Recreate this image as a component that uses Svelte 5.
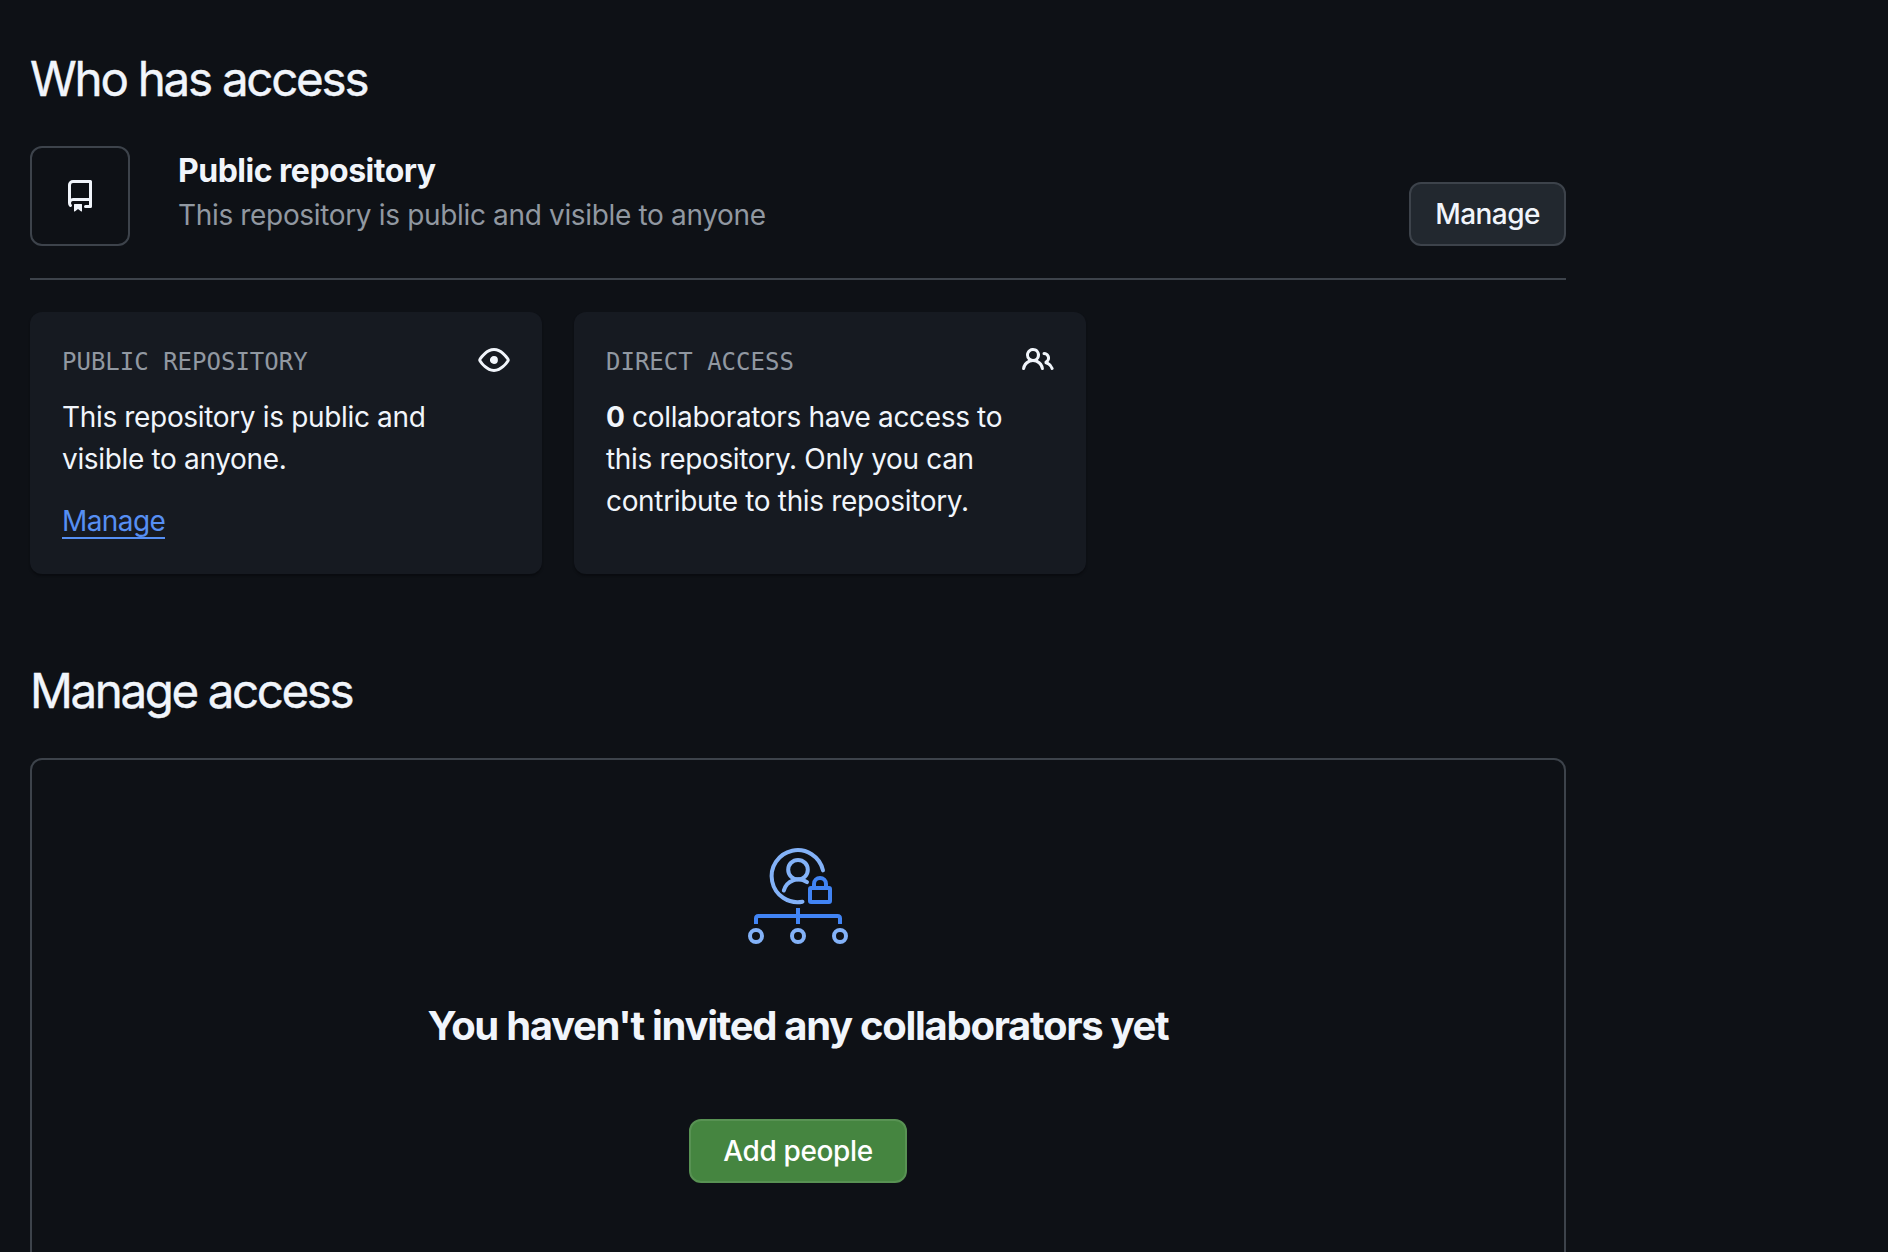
<script>
  const cards = [
    { title: 'Public repository', icon: 'eye' },
    { title: 'Direct access', icon: 'people' }
  ];
  const paths = {
    repo: 'M2 2.5A2.5 2.5 0 0 1 4.5 0h8.75a.75.75 0 0 1 .75.75v12.5a.75.75 0 0 1-.75.75h-2.5a.75.75 0 0 1 0-1.5h1.75v-2h-8a1 1 0 0 0-.714 1.7.75.75 0 1 1-1.072 1.05A2.495 2.495 0 0 1 2 11.5Zm10.5-1h-8a1 1 0 0 0-1 1v6.708A2.486 2.486 0 0 1 4.5 9h8ZM5 12.25a.25.25 0 0 1 .25-.25h3.5a.25.25 0 0 1 .25.25v3.25a.25.25 0 0 1-.4.2l-1.45-1.087a.249.249 0 0 0-.3 0L5.4 15.7a.25.25 0 0 1-.4-.2Z',
    eye: 'M8 2c1.981 0 3.671.992 4.933 2.078 1.27 1.091 2.187 2.345 2.637 3.023a1.62 1.62 0 0 1 0 1.798c-.45.678-1.367 1.932-2.637 3.023C11.67 13.008 9.981 14 8 14c-1.981 0-3.671-.992-4.933-2.078C1.797 10.83.88 9.576.43 8.898a1.62 1.62 0 0 1 0-1.798c.45-.677 1.367-1.931 2.637-3.022C4.33 2.992 6.019 2 8 2ZM1.679 7.932a.12.12 0 0 0 0 .136c.411.622 1.241 1.75 2.366 2.717C5.176 11.758 6.527 12.5 8 12.5c1.473 0 2.825-.742 3.955-1.715 1.124-.967 1.954-2.096 2.366-2.717a.12.12 0 0 0 0-.136c-.412-.621-1.242-1.75-2.366-2.717C10.824 4.242 9.473 3.5 8 3.5c-1.473 0-2.825.742-3.955 1.715-1.124.967-1.954 2.096-2.366 2.717ZM8 10a2 2 0 1 1-.001-3.999A2 2 0 0 1 8 10Z',
    people: 'M2 5.5a3.5 3.5 0 1 1 5.898 2.549 5.508 5.508 0 0 1 3.034 4.084.75.75 0 1 1-1.482.235 4 4 0 0 0-7.9 0 .75.75 0 0 1-1.482-.236A5.507 5.507 0 0 1 3.102 8.05 3.493 3.493 0 0 1 2 5.5ZM11 4a3.001 3.001 0 0 1 2.22 5.018 5.01 5.01 0 0 1 2.56 3.012.749.749 0 0 1-.885.954.752.752 0 0 1-.549-.514 3.507 3.507 0 0 0-2.522-2.372.75.75 0 0 1-.574-.73v-.352a.75.75 0 0 1 .416-.672A1.5 1.5 0 0 0 11 5.5.75.75 0 0 1 11 4Zm-5.5-.5a2 2 0 1 0-.001 3.999A2 2 0 0 0 5.5 3.5Z'
  };
</script>

{#snippet icon(name)}
  <svg class="icon" viewBox="0 0 16 16" aria-hidden="true"><path d={paths[name]} /></svg>
{/snippet}

<main>
  <h2 class="who">Who has access</h2>

  <section class="visibility">
    <div class="repo-box">{@render icon('repo')}</div>
    <div class="summary">
      <strong>Public repository</strong>
      <span>This repository is public and visible to anyone</span>
    </div>
    <button class="btn">Manage</button>
  </section>

  <section class="cards">
    {#each cards as card}
      <article class="card">
        <header>
          <h3>{card.title}</h3>
          {@render icon(card.icon)}
        </header>
        {#if card.icon === 'eye'}
          <p>This repository is public and<br />visible to anyone.</p>
          <a href="#manage">Manage</a>
        {:else}
          <p><b>0</b> collaborators have access to<br />this repository. Only you can<br />contribute to this repository.</p>
        {/if}
      </article>
    {/each}
  </section>

  <h2 class="manage" id="manage">Manage access</h2>

  <section class="panel">
    <svg class="art" viewBox="0 0 100 100" fill="none" stroke-width="4" stroke-linecap="round" aria-hidden="true">
      <g stroke="#83b2f8">
        <path d="M75 24.4A26 26 0 1 0 54.5 55.7" />
        <circle cx="50" cy="23.7" r="9.8" />
        <path d="M35.8 44.5A15 15 0 0 1 59 36.2" />
        <circle cx="8" cy="90" r="6" />
        <circle cx="50" cy="90" r="6" />
        <circle cx="92" cy="90" r="6" />
      </g>
      <g stroke="#4184f4">
        <rect x="62" y="42" width="20" height="14" rx="1" />
        <path stroke-linecap="butt" d="M66 42V38a6 6 0 0 1 12 0V42" />
        <path stroke-linecap="butt" d="M8 78V72.500Q8 70 10.500 70H89.500Q92 70 92 72.500V78M50 62V78" />
      </g>
    </svg>
    <h3>You haven't invited any collaborators yet</h3>
    <button class="btn primary">Add people</button>
  </section>
</main>

<style>
  :global(body) {
    background: #0e1116;
    overflow: hidden;
  }
  main {
    box-sizing: border-box;
    width: 1596px;
    height: 1252px;
    overflow: hidden;
    padding: 43px 30px 0;
    color: #f1f5fb;
    font: 400 28px/42px Inter, "Liberation Sans", sans-serif;
    letter-spacing: -0.34px;
  }
  h2, h3, p {
    margin: 0;
  }
  h2 {
    font-size: 47.5px;
    font-weight: 400;
    line-height: 72px;
    letter-spacing: -2.25px;
    white-space: nowrap;
    -webkit-text-stroke: 0.4px currentColor;
  }
  .icon {
    display: block;
    width: 32px;
    height: 32px;
    fill: currentColor;
  }
  .visibility {
    display: flex;
    box-sizing: border-box;
    height: 134px;
    margin-top: 31px;
    border-bottom: 2px solid #3d434b;
  }
  .repo-box {
    display: grid;
    place-items: center;
    box-sizing: border-box;
    width: 100px;
    height: 100px;
    border: 2px solid #3d434b;
    border-radius: 12px;
  }
  .summary {
    display: flex;
    flex: 1;
    flex-direction: column;
    padding: 1px 0 0 48px;
    white-space: nowrap;
  }
  .summary strong {
    font-size: 32px;
    font-weight: 700;
    line-height: 48px;
    letter-spacing: -0.5px;
  }
  .summary span {
    color: #9198a1;
    line-height: 41px;
  }
  .btn {
    box-sizing: border-box;
    width: 157px;
    height: 64px;
    margin-top: 36px;
    padding: 0;
    border: 2px solid #3d434b;
    border-radius: 12px;
    background: #22282f;
    color: #f1f5fb;
    font: 550 28px/40px Inter, "Liberation Sans", sans-serif;
    letter-spacing: -0.55px;
  }
  .cards {
    display: grid;
    grid-template-columns: 512px 512px;
    gap: 32px;
    margin-top: 32px;
  }
  .card {
    box-sizing: border-box;
    height: 262px;
    padding: 32px;
    border-radius: 12px;
    background: #161a21;
    box-shadow: 0 2px 2px #0a0c10;
    white-space: nowrap;
  }
  .card header {
    display: flex;
    justify-content: space-between;
    height: 52px;
  }
  .card h3 {
    color: #9198a1;
    font: 24px/36px "DejaVu Sans Mono", monospace;
    letter-spacing: 0;
    text-transform: uppercase;
  }
  .card b {
    font-weight: 700;
  }
  .card a {
    display: block;
    width: max-content;
    height: 31px;
    margin-top: 26px;
    border-bottom: 2px solid #568ff3;
    color: #568ff3;
    line-height: 31px;
    letter-spacing: -0.6px;
    text-decoration: none;
  }
  .manage {
    margin-top: 81px;
    letter-spacing: -2.4px;
  }
  .panel {
    display: flex;
    box-sizing: border-box;
    flex-direction: column;
    align-items: center;
    height: 560px;
    margin-top: 31px;
    padding-top: 86px;
    border: 2px solid #3d434b;
    border-radius: 12px;
  }
  .art {
    width: 100px;
    height: 100px;
  }
  .panel h3 {
    margin-top: 50px;
    font-size: 40px;
    font-weight: 650;
    line-height: 60px;
    letter-spacing: -1.3px;
    white-space: nowrap;
  }
  .primary {
    width: 218px;
    margin-top: 63px;
    border-color: #589253;
    background: #458540;
    color: #fff;
    letter-spacing: -0.35px;
  }
</style>
